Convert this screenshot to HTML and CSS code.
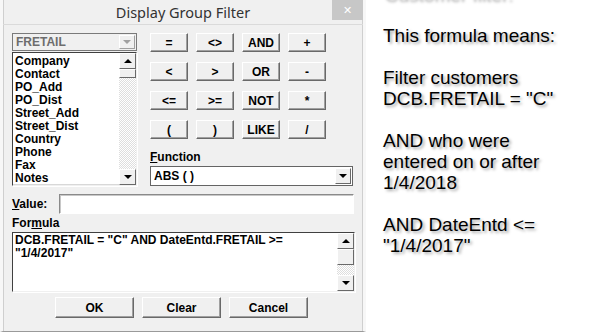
FILE: index.html
```html
<!DOCTYPE html>
<html lang="en">
<head>
    <meta charset="UTF-8">
    <meta name="viewport" content="width=device-width, initial-scale=1.0">
    <title>Display Group Filter</title>
    <link rel="stylesheet" href="styles.css">
</head>
<body>
    <div class="dialog">
        <div class="titlebar">
            <span class="title">Display Group Filter</span>
            <span class="close">&#x2715;</span>
        </div>

        <div class="top">
            <div class="fields">
                <div class="combo disabled">
                    <span class="combo-text">FRETAIL</span>
                    <span class="drop"><i class="arrow-down"></i></span>
                </div>
                <div class="list">
                    <div class="list-items">
                        <div>Company</div>
                        <div>Contact</div>
                        <div>PO_Add</div>
                        <div>PO_Dist</div>
                        <div>Street_Add</div>
                        <div>Street_Dist</div>
                        <div>Country</div>
                        <div>Phone</div>
                        <div>Fax</div>
                        <div>Notes</div>
                    </div>
                    <div class="scrollbar">
                        <span class="sbtn"><i class="arrow-up"></i></span>
                        <span class="thumb short"></span>
                        <span class="track"></span>
                        <span class="sbtn"><i class="arrow-down"></i></span>
                    </div>
                </div>
            </div>

            <div class="operators">
                <div class="ops">
                    <button>=</button>
                    <button>&lt;&gt;</button>
                    <button>AND</button>
                    <button>+</button>
                    <button>&lt;</button>
                    <button>&gt;</button>
                    <button>OR</button>
                    <button>-</button>
                    <button>&lt;=</button>
                    <button>&gt;=</button>
                    <button>NOT</button>
                    <button>*</button>
                    <button>(</button>
                    <button>)</button>
                    <button>LIKE</button>
                    <button>/</button>
                </div>
                <label class="label"><u>F</u>unction</label>
                <div class="combo fn">
                    <span class="combo-text">ABS ( )</span>
                    <span class="drop"><i class="arrow-down"></i></span>
                </div>
            </div>
        </div>

        <div class="value-row">
            <label class="label"><u>V</u>alue:</label>
            <div class="input"></div>
        </div>

        <label class="label formula-label">For<u>m</u>ula</label>
        <div class="formula">
            <div class="formula-text">DCB.FRETAIL = "C" AND DateEntd.FRETAIL &gt;=<br>"1/4/2017"</div>
            <div class="scrollbar">
                <span class="sbtn"><i class="arrow-up"></i></span>
                <span class="thumb"></span>
                <span class="track"></span>
                <span class="sbtn"><i class="arrow-down"></i></span>
            </div>
        </div>

        <div class="actions">
            <button class="action">OK</button>
            <button class="action">Clear</button>
            <button class="action">Cancel</button>
        </div>
    </div>

    <div class="notes">
        <p>Customer filter:</p>
        <p>This formula means:</p>
        <p>Filter customers<br>DCB.FRETAIL = "C"</p>
        <p>AND who were<br>entered on or after<br>1/4/2018</p>
        <p>AND DateEntd &lt;=<br>"1/4/2017"</p>
    </div>
</body>
</html>
```

FILE: styles.css
```css
body {
    margin: 0;
    display: flex;
    align-items: flex-start;
    background: #ffffff;
    font-family: "Liberation Sans", Arial, sans-serif;
    overflow: hidden;
}

.dialog {
    width: 366px;
    height: 332px;
    box-sizing: border-box;
    background: #f0f0f0;
    border-left: 3px solid #f7f7f7;
    border-right: 3px solid #f7f7f7;
    border-bottom: 1px solid #9a9a9a;
    box-shadow: inset 1px 0 0 #cfcfcf, inset -1px 0 0 #cfcfcf;
    display: flex;
    flex-direction: column;
    font-weight: bold;
    font-size: 12px;
}

.titlebar {
    height: 24px;
    display: flex;
    align-items: flex-start;
    padding-left: 31px;
    border-bottom: 1px solid #dadada;
    font-family: "Noto Sans", sans-serif;
    font-weight: normal;
}

.title {
    flex: 1;
    text-align: center;
    font-size: 14.5px;
    line-height: 24px;
    color: #333333;
}

.close {
    width: 31px;
    height: 20px;
    background: #c7c7c7;
    color: #ffffff;
    font-size: 11px;
    line-height: 20px;
    text-align: center;
}

.top {
    display: flex;
    gap: 13px;
    padding: 8px 0 0 9px;
}

.fields {
    width: 125px;
    display: flex;
    flex-direction: column;
    gap: 1px;
}

.combo {
    height: 18px;
    box-sizing: border-box;
    display: flex;
    align-items: center;
    background: #ffffff;
    border: 1px solid #7a7a7a;
    padding: 1px;
}

.combo.disabled {
    background: #f0f0f0;
    color: #6d6d6d;
}

.combo-text {
    flex: 1;
    padding-left: 2px;
}

.drop {
    width: 16px;
    height: 14px;
    box-sizing: border-box;
    display: flex;
    align-items: center;
    justify-content: center;
    background: #f0f0f0;
    border: 1px solid;
    border-color: #ffffff #696969 #696969 #ffffff;
}

.combo.disabled .drop {
    border-color: #ffffff #a0a0a0 #a0a0a0 #ffffff;
}

.combo.disabled .arrow-down {
    border-top-color: #a0a0a0;
}

.arrow-down,
.arrow-up {
    width: 0;
    height: 0;
    border-left: 4px solid transparent;
    border-right: 4px solid transparent;
}

.arrow-down {
    border-top: 4px solid #000000;
}

.arrow-up {
    border-bottom: 4px solid #000000;
}

.list {
    height: 134px;
    box-sizing: border-box;
    display: flex;
    background: #ffffff;
    border: 1px solid;
    border-color: #404040 #f0f0f0 #f0f0f0 #404040;
    box-shadow: 1px 1px 0 #ffffff, inset -1px -1px 0 #d8d8d8;
}

.list-items {
    flex: 1;
    padding: 2px 0 0 2px;
    line-height: 13px;
    color: #000000;
    overflow: hidden;
}

.scrollbar {
    width: 17px;
    display: flex;
    flex-direction: column;
}

.sbtn,
.thumb {
    height: 16px;
    box-sizing: border-box;
    display: flex;
    align-items: center;
    justify-content: center;
    background: #f0f0f0;
    border: 1px solid;
    border-color: #ffffff #696969 #696969 #ffffff;
}

.thumb.short {
    height: 9px;
}

.track {
    flex: 1;
    background: repeating-conic-gradient(#ffffff 0 25%, #dedede 0 50%) 0 0 / 2px 2px;
}

.operators {
    display: flex;
    flex-direction: column;
}

.ops {
    display: grid;
    grid-template-columns: repeat(4, 38px);
    grid-auto-rows: 19px;
    column-gap: 8px;
    row-gap: 10px;
}

button {
    padding: 0;
    font-family: "Liberation Sans", Arial, sans-serif;
    font-weight: bold;
    font-size: 12px;
    color: #000000;
    background: #f0f0f0;
    border: 1px solid;
    border-color: #ffffff #696969 #696969 #ffffff;
    box-shadow: inset -1px -1px 0 #a0a0a0;
}

.label {
    display: block;
    line-height: 13px;
}

.operators .label {
    margin-top: 12px;
    margin-bottom: 2px;
}

.combo.fn {
    width: 203px;
    height: 20px;
    border-color: #646464;
}

.combo.fn .drop {
    height: 16px;
}

.value-row {
    display: flex;
    align-items: center;
    gap: 12px;
    padding: 8px 0 0 9px;
}

.input {
    width: 295px;
    height: 20px;
    box-sizing: border-box;
    background: #ffffff;
    border: 1px solid;
    border-color: #8a8a8a #ffffff #ffffff #8a8a8a;
    box-shadow: inset 1px 1px 0 #c8c8c8;
}

.formula-label {
    padding: 3px 0 0 9px;
}

.formula {
    display: flex;
    width: 343px;
    height: 60px;
    box-sizing: border-box;
    margin: 2px 0 0 9px;
    background: #ffffff;
    border: 1px solid;
    border-color: #404040 #f0f0f0 #f0f0f0 #404040;
    box-shadow: 1px 1px 0 #ffffff;
}

.formula-text {
    flex: 1;
    padding: 1px 0 0 2px;
    line-height: 13px;
}

.actions {
    display: flex;
    gap: 8px;
    padding: 5px 0 0 52px;
}

.action {
    width: 79px;
    height: 21px;
}

.notes {
    padding-left: 17px;
    margin-top: -17px;
    font-size: 19px;
    line-height: 21px;
    color: #000000;
    text-shadow: 2px 2px 3px rgba(0, 0, 0, 0.35);
}

.notes p {
    margin: 0 0 21px 0;
}
```
